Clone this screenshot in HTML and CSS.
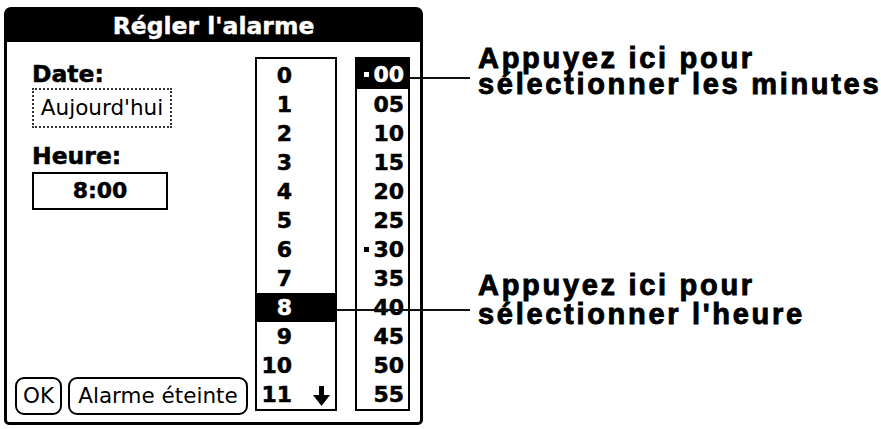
FILE: index.html
```html
<!DOCTYPE html>
<html lang="fr">
<head>
<meta charset="utf-8">
<title>Régler l'alarme</title>
<link rel="stylesheet" href="styles.css">
</head>
<body>
<div class="page">
  <div class="dialog">
    <div class="title">Régler l'alarme</div>
    <div class="body">
      <div class="left">
        <div class="fields">
          <div class="label">Date:</div>
          <div class="datebox">Aujourd'hui</div>
          <div class="label label-heure">Heure:</div>
          <div class="timebox">8:00</div>
        </div>
        <div class="buttons">
          <div class="btn btn-ok">OK</div>
          <div class="btn btn-off">Alarme éteinte</div>
        </div>
      </div>
      <div class="col hours">
        <div class="row"><span class="num">0</span></div>
        <div class="row"><span class="num">1</span></div>
        <div class="row"><span class="num">2</span></div>
        <div class="row"><span class="num">3</span></div>
        <div class="row"><span class="num">4</span></div>
        <div class="row"><span class="num">5</span></div>
        <div class="row"><span class="num">6</span></div>
        <div class="row"><span class="num">7</span></div>
        <div class="row sel"><span class="num">8</span></div>
        <div class="row"><span class="num">9</span></div>
        <div class="row"><span class="num">10</span></div>
        <div class="row"><span class="num">11</span>
          <svg class="arrow" width="17" height="20" viewBox="0 0 17 20"><rect x="6" y="0" width="5" height="10" fill="#000"/><polygon points="0,9 17,9 8.5,20" fill="#000"/></svg>
        </div>
      </div>
      <div class="col minutes">
        <div class="row sel first"><span class="dot"></span>00</div>
        <div class="row">05</div>
        <div class="row">10</div>
        <div class="row">15</div>
        <div class="row">20</div>
        <div class="row">25</div>
        <div class="row"><span class="dot"></span>30</div>
        <div class="row">35</div>
        <div class="row">40</div>
        <div class="row">45</div>
        <div class="row">50</div>
        <div class="row">55</div>
      </div>
    </div>
  </div>
  <div class="callouts">
    <div class="callout c1">Appuyez ici pour<br>sélectionner les minutes</div>
    <div class="callout c2">Appuyez ici pour<br>sélectionner l'heure</div>
  </div>
</div>
</body>
</html>
```
FILE: styles.css
```css
body {
  margin: 0;
  background: #fff;
}
.page {
  display: flex;
  align-items: flex-start;
  font-family: "DejaVu Sans", sans-serif;
  color: #000;
}
.dialog {
  margin: 7px 0 0 4px;
  width: 419px;
  height: 418px;
  box-sizing: border-box;
  border: 3px solid #000;
  border-radius: 7px 7px 5px 5px;
  display: flex;
  flex-direction: column;
  flex: none;
}
.title {
  height: 32px;
  box-sizing: border-box;
  padding-top: 1px;
  background: #000;
  color: #fff;
  font-weight: bold;
  font-size: 23.5px;
  line-height: 31px;
  text-align: center;
  -webkit-text-stroke: 0.4px #fff;
}
.body {
  flex: 1;
  display: flex;
}
.left {
  width: 248px;
  display: flex;
  flex-direction: column;
  justify-content: space-between;
  padding-bottom: 7px;
  box-sizing: border-box;
}
.fields {
  padding: 19px 0 0 25px;
}
.label {
  font-weight: bold;
  font-size: 23.5px;
  line-height: 26px;
  -webkit-text-stroke: 0.5px #000;
}
.label-heure {
  margin-top: 15px;
}
.datebox {
  margin-top: 1px;
  width: 140px;
  height: 40px;
  box-sizing: border-box;
  border: 2px dotted #333;
  font-size: 21.5px;
  line-height: 36px;
  text-align: center;
}
.timebox {
  margin-top: 3px;
  width: 136px;
  height: 38px;
  box-sizing: border-box;
  border: 2px solid #000;
  font-weight: bold;
  font-size: 22px;
  line-height: 34px;
  text-align: center;
  -webkit-text-stroke: 0.5px #000;
}
.buttons {
  display: flex;
  gap: 6px;
  padding-left: 8px;
}
.btn {
  height: 38px;
  box-sizing: border-box;
  border: 2px solid #000;
  border-radius: 9px;
  font-size: 21.5px;
  line-height: 34px;
  text-align: center;
}
.btn-ok {
  width: 47px;
}
.btn-off {
  width: 180px;
}
.col {
  margin-top: 15px;
  align-self: flex-start;
  border: 2px solid #000;
  padding-top: 2px;
  box-sizing: border-box;
}
.hours {
  width: 82px;
}
.minutes {
  width: 55px;
  margin-left: 18px;
}
.row {
  height: 29px;
  line-height: 29px;
  font-weight: bold;
  font-size: 22px;
  -webkit-text-stroke: 0.5px currentColor;
}
.hours .row {
  display: flex;
  align-items: center;
}
.num {
  width: 35px;
  text-align: right;
}
.arrow {
  margin-left: auto;
  margin-right: 5px;
  margin-top: 3px;
}
.minutes .row {
  text-align: right;
  padding-right: 4px;
}
.minutes .first {
  margin-top: -2px;
  padding-top: 1px;
  margin-bottom: 1px;
}
.sel {
  background: #000;
  color: #fff;
}
.dot {
  display: inline-block;
  width: 5px;
  height: 5px;
  background: currentColor;
  margin-right: 4px;
  vertical-align: 5px;
}
.callouts {
  flex: 1;
  padding-left: 55px;
}
.callout {
  position: relative;
  font-family: "Liberation Sans", Arial, sans-serif;
  font-weight: bold;
  font-size: 29px;
  letter-spacing: 2.7px;
  white-space: nowrap;
  -webkit-text-stroke: 0.9px #000;
}
.callout::before {
  content: "";
  position: absolute;
  height: 2px;
  background: #111;
}
.c1 {
  margin-top: 45px;
  line-height: 26px;
}
.c1::before {
  left: -68px;
  width: 60px;
  top: 32px;
}
.c2 {
  margin-top: 174px;
  line-height: 29px;
}
.c2::before {
  left: -142px;
  width: 134px;
  top: 38px;
}
```
